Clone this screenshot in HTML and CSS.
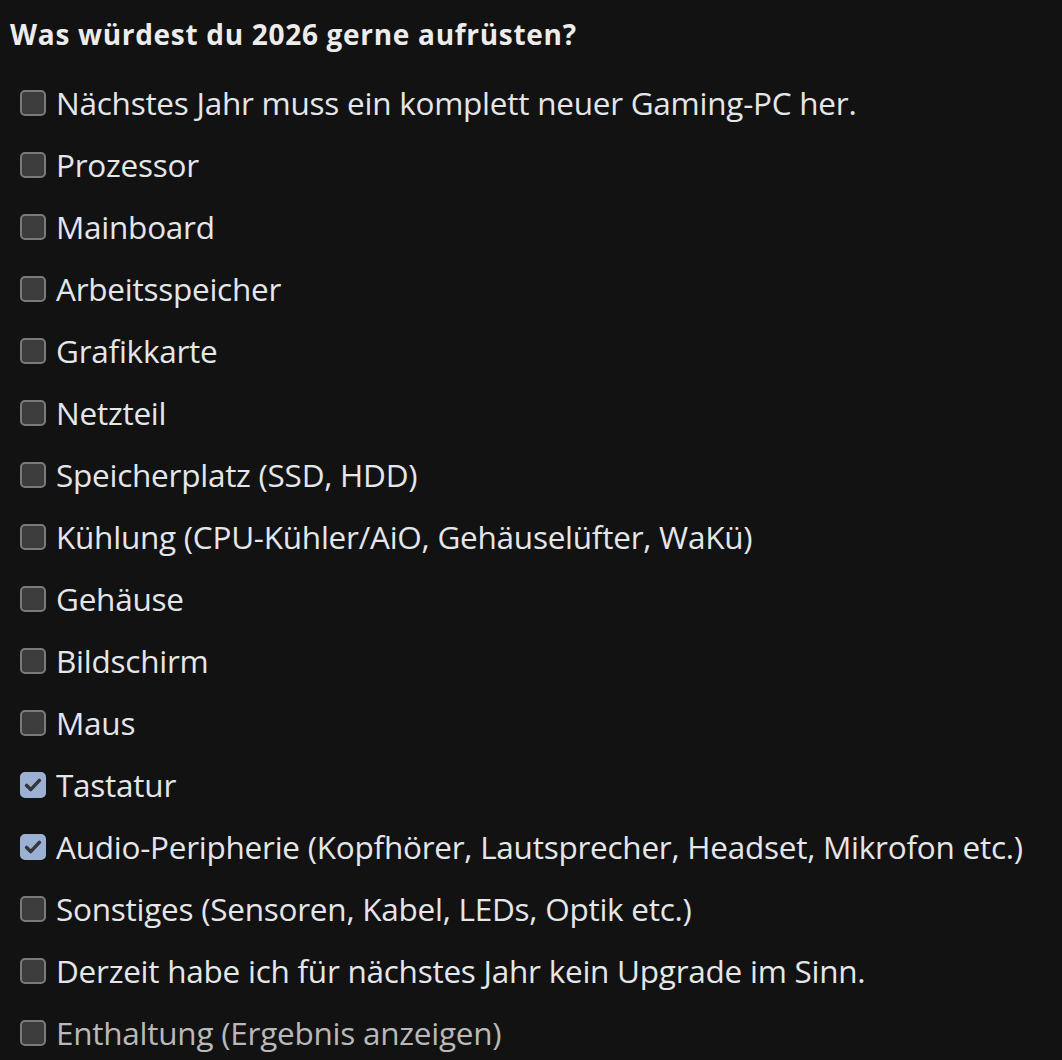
FILE: index.html
```html
<!DOCTYPE html>
<html lang="de">
<head>
<meta charset="utf-8">
<title>Umfrage</title>
<link rel="stylesheet" href="styles.css">
</head>
<body>
<form class="poll">
  <h2 class="poll-title">Was würdest du 2026 gerne aufrüsten?</h2>
  <ul class="options">
    <li class="option"><span class="box"></span><span class="label">Nächstes Jahr muss ein komplett neuer Gaming-PC her.</span></li>
    <li class="option"><span class="box"></span><span class="label">Prozessor</span></li>
    <li class="option"><span class="box"></span><span class="label">Mainboard</span></li>
    <li class="option"><span class="box"></span><span class="label">Arbeitsspeicher</span></li>
    <li class="option"><span class="box"></span><span class="label">Grafikkarte</span></li>
    <li class="option"><span class="box"></span><span class="label">Netzteil</span></li>
    <li class="option"><span class="box"></span><span class="label">Speicherplatz (SSD, HDD)</span></li>
    <li class="option"><span class="box"></span><span class="label">Kühlung (CPU-Kühler/AiO, Gehäuselüfter, WaKü)</span></li>
    <li class="option"><span class="box"></span><span class="label">Gehäuse</span></li>
    <li class="option"><span class="box"></span><span class="label">Bildschirm</span></li>
    <li class="option"><span class="box"></span><span class="label">Maus</span></li>
    <li class="option"><span class="box checked"><svg viewBox="0 0 24 24" class="tick"><path d="M5 12.5l4.5 4.5L19 7" fill="none" stroke="#33363b" stroke-width="3.8" stroke-linecap="round" stroke-linejoin="round"/></svg></span><span class="label">Tastatur</span></li>
    <li class="option"><span class="box checked"><svg viewBox="0 0 24 24" class="tick"><path d="M5 12.5l4.5 4.5L19 7" fill="none" stroke="#33363b" stroke-width="3.8" stroke-linecap="round" stroke-linejoin="round"/></svg></span><span class="label">Audio-Peripherie (Kopfhörer, Lautsprecher, Headset, Mikrofon etc.)</span></li>
    <li class="option"><span class="box"></span><span class="label">Sonstiges (Sensoren, Kabel, LEDs, Optik etc.)</span></li>
    <li class="option"><span class="box"></span><span class="label">Derzeit habe ich für nächstes Jahr kein Upgrade im Sinn.</span></li>
    <li class="option muted"><span class="box"></span><span class="label">Enthaltung (Ergebnis anzeigen)</span></li>
  </ul>
</form>
</body>
</html>
```
FILE: styles.css
```css
html, body {
  margin: 0;
  background: #121212;
}
body {
  font-family: "Open Sans", "Noto Sans", sans-serif;
  color: #e4e6ea;
}
.poll {
  padding: 14px 0 0 10px;
}
.poll-title {
  margin: 0;
  font-size: 28px;
  font-weight: 700;
  line-height: 40px;
  letter-spacing: 0.7px;
  color: #ececec;
}
.options {
  list-style: none;
  margin: 0;
  padding: 18px 0 0 10px;
}
.option {
  display: flex;
  align-items: center;
  gap: 10px;
  height: 62px;
}
.box {
  flex: none;
  box-sizing: border-box;
  width: 26px;
  height: 26px;
  border: 2px solid #7a7a7a;
  border-radius: 5px;
  background: #3c3c3c;
  display: flex;
  align-items: center;
  justify-content: center;
}
.box.checked {
  background: #9bb0d3;
  border-color: #9bb0d3;
}
.tick {
  width: 22px;
  height: 22px;
}
.label {
  font-size: 31.5px;
  line-height: 40px;
  letter-spacing: -0.25px;
}
.muted .label {
  color: #b9b9b9;
}
```
